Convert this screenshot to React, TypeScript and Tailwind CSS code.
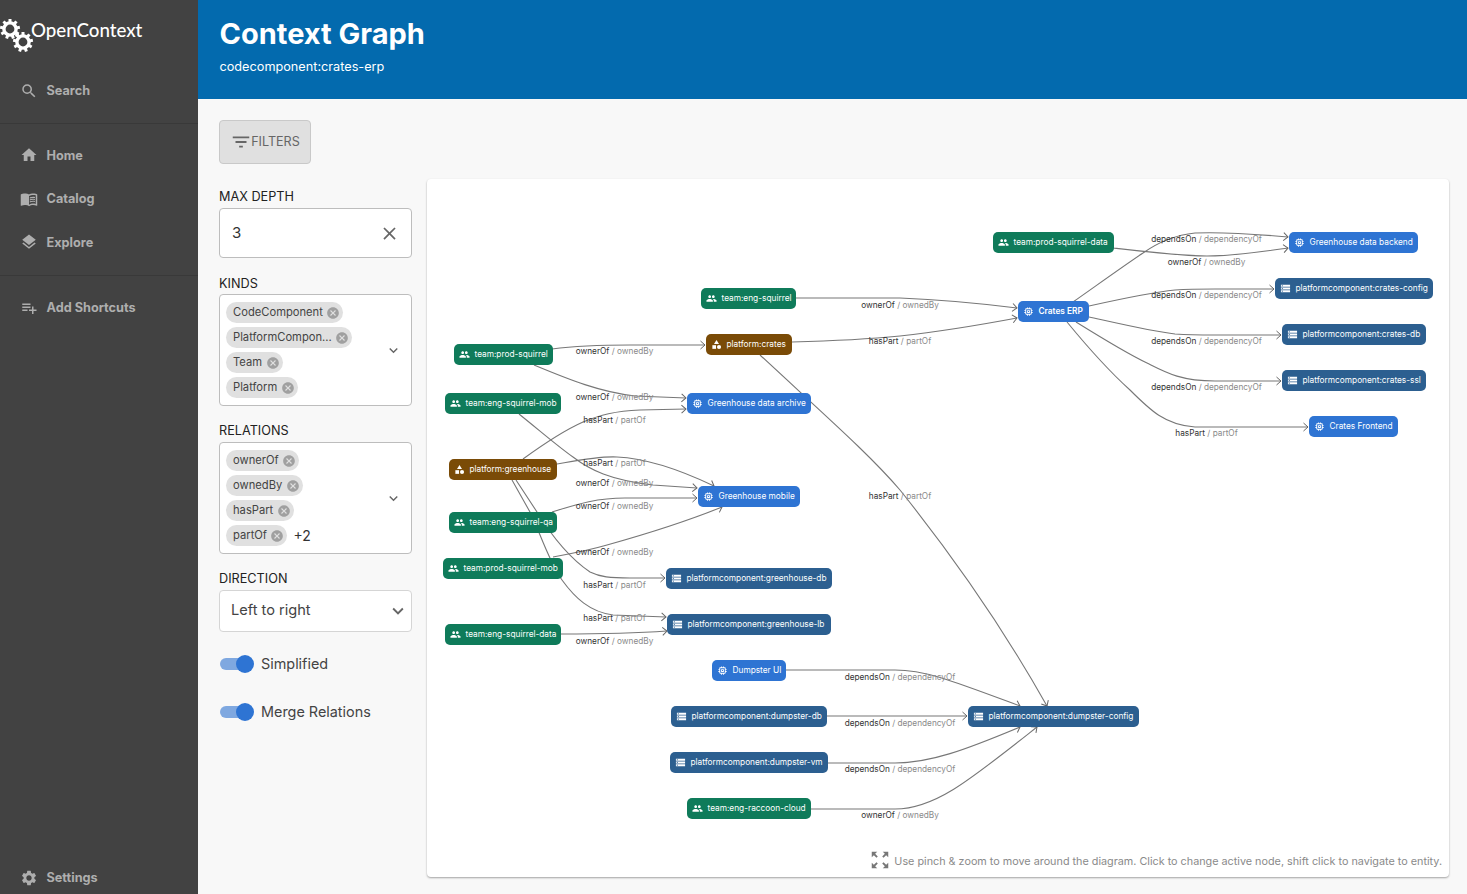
import React from "react";
import {
  MdSearch, MdHome, MdMenuBook, MdLayers, MdPlaylistAdd, MdSettings, MdFilterList, MdClose, MdCancel,
  MdKeyboardArrowDown, MdPeople, MdMemory, MdCategory, MdStorage, MdZoomOutMap,
} from "react-icons/md";

type Kind = "team" | "comp" | "res" | "plat";
const kindStyle: Record<Kind, string> = {
  team: "bg-[#0f7b5a]",
  comp: "bg-[#2e74d3]",
  res: "bg-[#2c5f90]",
  plat: "bg-[#7a4b07]",
};
const kindIcon = { team: MdPeople, comp: MdMemory, res: MdStorage, plat: MdCategory };

const nodes: [string, Kind, number, number, number, boolean?][] = [
  ["team:prod-squirrel-data", "team", 993, 1114, 242],
  ["Greenhouse data backend", "comp", 1289, 1418, 242],
  ["platformcomponent:crates-config", "res", 1275, 1433, 288],
  ["Crates ERP", "comp", 1018, 1089, 311, true],
  ["platformcomponent:crates-db", "res", 1282, 1426, 334],
  ["platformcomponent:crates-ssl", "res", 1282, 1426, 380],
  ["Crates Frontend", "comp", 1309, 1398, 426],
  ["team:eng-squirrel", "team", 701, 796, 298],
  ["platform:crates", "plat", 706, 792, 344],
  ["team:prod-squirrel", "team", 454, 553, 354],
  ["team:eng-squirrel-mob", "team", 445, 561, 403],
  ["Greenhouse data archive", "comp", 687, 811, 403],
  ["platform:greenhouse", "plat", 449, 557, 469],
  ["Greenhouse mobile", "comp", 698, 800, 496],
  ["team:eng-squirrel-qa", "team", 449, 557, 522],
  ["team:prod-squirrel-mob", "team", 443, 563, 568],
  ["platformcomponent:greenhouse-db", "res", 666, 832, 578],
  ["platformcomponent:greenhouse-lb", "res", 667, 831, 624],
  ["team:eng-squirrel-data", "team", 445, 561, 634],
  ["Dumpster UI", "comp", 712, 786, 670],
  ["platformcomponent:dumpster-db", "res", 671, 827, 716],
  ["platformcomponent:dumpster-config", "res", 968, 1139, 716],
  ["platformcomponent:dumpster-vm", "res", 670, 828, 762],
  ["team:eng-raccoon-cloud", "team", 687, 811, 808],
];

const edges = [
  "M552 349 C575 346 600 345 630 345 L705 345",
  "M534 365 C570 380 600 392 635 396 L686 398",
  "M519 414 C545 435 560 448 573 457 C590 470 610 480 653 485 L697 488",
  "M523 459 C545 443 565 430 583 422 C600 415 615 411 640 410 L686 409",
  "M557 464 C580 460 600 456 617 457 C640 458 670 465 714 486",
  "M552 512 C575 505 595 498 625 498 L697 498",
  "M553 557 C575 553 590 550 607 545 C650 533 690 520 722 507",
  "M516 480 L537 512 C545 525 565 555 590 572 C600 577 610 578 630 578 L665 578",
  "M512 480 L530 512 C538 527 548 560 562 580 C575 598 590 612 613 615 L666 617",
  "M561 634 C600 634 625 634 667 631",
  "M796 298 L900 298 C950 300 985 304 1017 308",
  "M792 342 C830 341 870 339 900 336 C945 331 985 324 1017 318",
  "M760 355 C830 420 870 455 900 490 C960 565 1010 640 1047 706",
  "M1073 302 C1100 283 1125 265 1143 253 C1160 241 1175 235 1195 233 C1220 232 1255 234 1288 237",
  "M1113 248 C1147 252 1180 256 1207 256 C1235 256 1260 252 1288 248",
  "M1089 306 C1125 298 1155 292 1175 290 C1190 289 1200 289 1215 289 L1274 289",
  "M1089 317 C1125 325 1155 332 1175 334 C1190 335 1200 335 1215 335 L1281 335",
  "M1076 322 C1105 340 1130 355 1147 363 C1165 372 1180 381 1215 381 L1281 381",
  "M1067 322 C1090 350 1110 372 1130 390 C1150 410 1165 425 1195 427 L1308 427",
  "M786 670 L895 670 C925 670 950 680 1020 706",
  "M827 716 L967 716",
  "M828 763 L895 763 C930 763 965 750 1020 727",
  "M810 809 L895 809 C935 809 970 780 1037 727",
];

const labels: [string, string, number, number][] = [
  ["dependsOn", "dependencyOf", 1206.5, 239],
  ["ownerOf", "ownedBy", 1206.5, 262],
  ["dependsOn", "dependencyOf", 1206.5, 295],
  ["dependsOn", "dependencyOf", 1206.5, 341],
  ["dependsOn", "dependencyOf", 1206.5, 387],
  ["hasPart", "partOf", 1206.5, 433],
  ["ownerOf", "ownedBy", 900, 305],
  ["hasPart", "partOf", 900, 341],
  ["hasPart", "partOf", 900, 496],
  ["ownerOf", "ownedBy", 614.5, 351],
  ["ownerOf", "ownedBy", 614.5, 397],
  ["hasPart", "partOf", 614.5, 420],
  ["hasPart", "partOf", 614.5, 463],
  ["ownerOf", "ownedBy", 614.5, 483],
  ["ownerOf", "ownedBy", 614.5, 506],
  ["ownerOf", "ownedBy", 614.5, 552],
  ["hasPart", "partOf", 614.5, 585],
  ["hasPart", "partOf", 614.5, 618],
  ["ownerOf", "ownedBy", 614.5, 641],
  ["dependsOn", "dependencyOf", 900, 677],
  ["dependsOn", "dependencyOf", 900, 723],
  ["dependsOn", "dependencyOf", 900, 769],
  ["ownerOf", "ownedBy", 900, 815],
];

function Gear({ cx, cy, r }: { cx: number; cy: number; r: number }) {
  return (
    <g fill="white">
      {Array.from({ length: 9 }).map((_, i) => (
        <rect key={i} x={cx - 1.5} y={cy - r} width={3} height={3.4} transform={`rotate(${i * 40} ${cx} ${cy})`} />
      ))}
      <circle cx={cx} cy={cy} r={r - 3.9} fill="none" stroke="white" strokeWidth={3.4} />
    </g>
  );
}

function NavRow({ icon: Icon, label, h = "h-[43.5px]" }: { icon: any; label: string; h?: string }) {
  return (
    <div className={`flex items-center ${h} pl-[19.5px] text-[#aeaeae]`}>
      <Icon className="w-[18px] h-[18px] shrink-0" />
      <span className="ml-[9px] text-[12.7px] font-bold">{label}</span>
    </div>
  );
}

function Chip({ label }: { label: string }) {
  return (
    <span className="inline-flex items-center h-[21.5px] rounded-full bg-[#e0e0e0] pl-[7px] pr-[3px] text-[11.2px] text-[#444] leading-none">
      {label}
      <MdCancel className="w-[14px] h-[14px] ml-[3.5px] text-[#a0a0a0]" />
    </span>
  );
}

function FieldLabel({ children }: { children: React.ReactNode }) {
  return <div className="h-[16px] text-[12.7px] leading-[18px] text-[#222] uppercase">{children}</div>;
}

function MultiBox({ chips, extra }: { chips: string[]; extra?: string }) {
  return (
    <div className="mt-[3px] h-[112px] border border-[#bdbdbd] rounded-[4px] bg-white flex items-center pl-[6px] pr-[9px]">
      <div className="flex-1 flex flex-col items-start gap-[3.5px]">
        {chips.map((c, i) => (
          <div key={c} className="flex items-center">
            <Chip label={c} />
            {extra && i === chips.length - 1 && <span className="ml-[6px] text-[14px] text-[#333]">{extra}</span>}
          </div>
        ))}
      </div>
      <MdKeyboardArrowDown className="w-[17px] h-[17px] text-[#666]" />
    </div>
  );
}

function Toggle({ label }: { label: string }) {
  return (
    <div className="flex items-center h-[24px]">
      <div className="relative w-[30px] h-[12px] ml-[1px] rounded-full bg-[#7fa8e0]">
        <div className="absolute right-[-4px] top-[-3px] w-[18px] h-[18px] rounded-full bg-[#2e74d3]" />
      </div>
      <span className="ml-[11px] text-[14.4px] text-[#444]">{label}</span>
    </div>
  );
}

export default function App() {
  return (
    <div className="flex w-[1467px] h-[894px] overflow-hidden font-[Inter,sans-serif] bg-[#f8f8f8]">
      <aside className="w-[198px] h-full bg-[#424242] flex flex-col shrink-0">
        <div className="h-[69px] relative flex items-start">
          <svg width="36" height="54" viewBox="0 0 36 54" className="shrink-0">
            <Gear cx={10} cy={29} r={10} />
            <Gear cx={23} cy={42} r={10} />
            <circle cx={17} cy={35} r={2} fill="white" />
          </svg>
          <span className="ml-[-5px] mt-[18px] font-[Lato,sans-serif] text-[18.7px] leading-[24px] font-medium text-white">OpenContext</span>
        </div>
        <NavRow icon={MdSearch} label="Search" />
        <div className="mt-[10px] border-t border-[#393939]" />
        <div className="pt-[10px]">
          <NavRow icon={MdHome} label="Home" />
          <NavRow icon={MdMenuBook} label="Catalog" />
          <NavRow icon={MdLayers} label="Explore" />
        </div>
        <div className="mt-[11px] border-t border-[#393939]" />
        <div className="pt-[10px]">
          <NavRow icon={MdPlaylistAdd} label="Add Shortcuts" />
        </div>
        <div className="mt-auto">
          <NavRow icon={MdSettings} label="Settings" h="h-[33px]" />
        </div>
      </aside>
      <div className="flex-1 flex flex-col min-w-0">
        <header className="h-[99px] bg-[#036aae] pl-[21.5px] text-white shrink-0">
          <h1 className="mt-[17px] text-[29px] leading-[34px] font-bold">Context Graph</h1>
          <div className="mt-[8px] text-[12.7px] leading-[16px]">codecomponent:crates-erp</div>
        </header>
        <main className="flex-1 pt-[21px] pl-[21px] pr-[18px] flex flex-col">
          <div className="w-[92px] h-[44px] rounded-[4px] border border-[#c9c9c9] bg-[#e0e0e0] flex items-center justify-center text-[#666] text-[12.6px]">
            <MdFilterList className="w-[22px] h-[22px] text-[#666]" />
            <span className="ml-[-1px]">FILTERS</span>
          </div>
          <div className="flex mt-[15px]">
            <div className="w-[193px] shrink-0 pt-[9px]">
              <FieldLabel>Max Depth</FieldLabel>
              <div className="mt-[4px] h-[50px] border border-[#bdbdbd] rounded-[4px] bg-white flex items-center justify-between pl-[12px] pr-[11px] text-[15px] text-[#333]">
                3
                <MdClose className="w-[21px] h-[21px] text-[#666]" />
              </div>
              <div className="mt-[17px]"><FieldLabel>Kinds</FieldLabel></div>
              <MultiBox chips={["CodeComponent", "PlatformCompon...", "Team", "Platform"]} />
              <div className="mt-[16px]"><FieldLabel>Relations</FieldLabel></div>
              <div className="pt-[1px]"><MultiBox chips={["ownerOf", "ownedBy", "hasPart", "partOf"]} extra="+2" /></div>
              <div className="mt-[16px]"><FieldLabel>Direction</FieldLabel></div>
              <div className="mt-[4px] h-[42px] border border-[#d5d5d5] rounded-[4px] bg-white flex items-center justify-between pl-[11px] pr-[2px] text-[14.6px] text-[#444]">
                Left to right
                <MdKeyboardArrowDown className="w-[22px] h-[22px] text-[#666]" />
              </div>
              <div className="mt-[20px]"><Toggle label="Simplified" /></div>
              <div className="mt-[24px]"><Toggle label="Merge Relations" /></div>
            </div>
            <div className="ml-[15px] w-[1022px] h-[698px] relative rounded-[4px] bg-white shadow-[0_1px_2px_rgba(0,0,0,0.35)]">
              <svg className="absolute inset-0" width="1022" height="698" viewBox="427 179 1022 698" fill="none">
                <defs>
                  <marker id="arr" markerWidth="8" markerHeight="10" refX="7" refY="5" orient="auto" markerUnits="userSpaceOnUse">
                    <path d="M2.5 1 L7 5 L2.5 9" fill="none" stroke="#666" strokeWidth="1" />
                  </marker>
                </defs>
                {edges.map((d, i) => (
                  <path key={i} d={d} stroke="#777" strokeWidth="1.1" fill="none" markerEnd="url(#arr)" />
                ))}
              </svg>
              {labels.map(([a, b, x, y], i) => (
                <div
                  key={i}
                  className="absolute -translate-x-1/2 -translate-y-1/2 whitespace-nowrap text-[8.25px] leading-none text-[#333]"
                  style={{ left: x - 427, top: y - 179 }}
                >
                  {a} <span className="text-[#8a8a8a]">/ {b}</span>
                </div>
              ))}
              {nodes.map(([name, kind, x0, x1, y, bold]) => {
                const Icon = kindIcon[kind];
                return (
                  <div
                    key={name}
                    className={`absolute h-[21px] rounded-[5px] flex items-center pl-[5px] gap-[4.5px] text-white text-[8.3px] whitespace-nowrap ${kindStyle[kind]} ${bold ? "font-semibold" : ""}`}
                    style={{ left: x0 - 427, top: y - 179 - 10.5, width: x1 - x0 }}
                  >
                    <Icon className="w-[11px] h-[11px] shrink-0" />
                    <span>{name}</span>
                  </div>
                );
              })}
              <div className="absolute right-[7px] bottom-[3px] flex items-center text-[10.8px] leading-[14px] text-[#8a8a8a] whitespace-nowrap">
                <MdZoomOutMap className="w-[22px] h-[22px] text-[#777] mr-[3px] mb-[3px]" />
                Use pinch &amp; zoom to move around the diagram. Click to change active node, shift click to navigate to entity.
              </div>
            </div>
          </div>
        </main>
      </div>
    </div>
  );
}
